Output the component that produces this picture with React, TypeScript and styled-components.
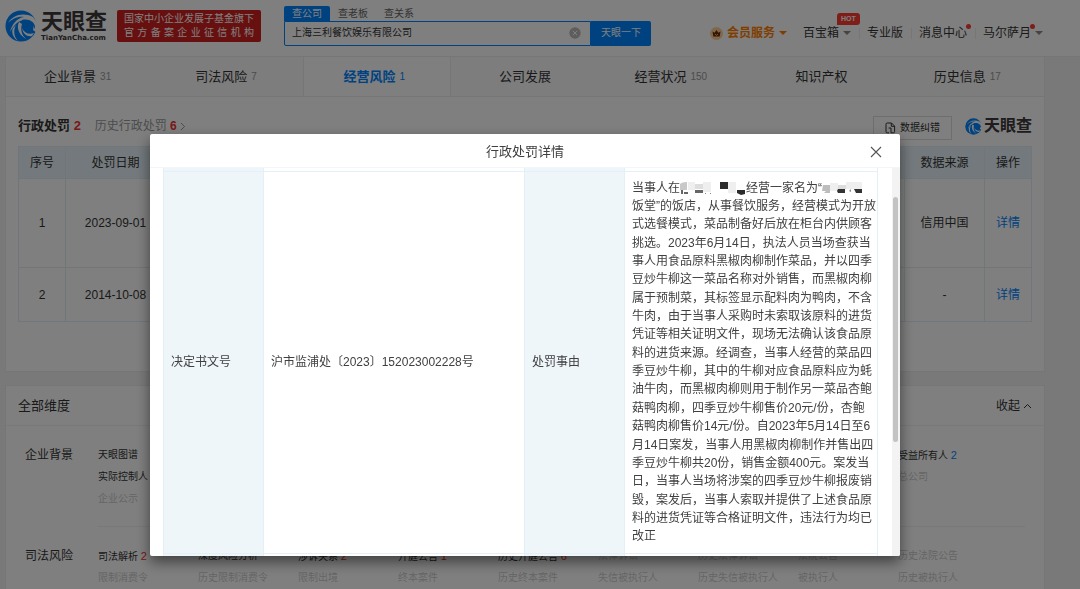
import React from "react";
import styled, { createGlobalStyle } from "styled-components";

const GlobalStyle = createGlobalStyle`
  *, *::before, *::after { box-sizing: border-box; }
  body {
    margin: 0;
    overflow: hidden;
    background: #f3f3f3;
    color: #333;
    font-family: "Liberation Sans", "Noto Sans CJK SC", sans-serif;
    font-size: 12px;
    line-height: 18px;
  }
  button, input { font: inherit; color: inherit; }
  a { color: inherit; text-decoration: none; }
  h1, h2, h3, p { margin: 0; font: inherit; }
`;

const Page = styled.div`
  height: 100vh;
  overflow: hidden;
`;

/* ---------- header ---------- */

const Header = styled.header`
  display: flex;
  align-items: center;
  height: 57px;
  padding: 0 37px 5px 5px;
  background: #fff;
  border-bottom: 1px solid #ececec;
`;

const Logo = styled.a`
  display: flex;
  align-items: center;
  gap: 4px;
  flex: none;
`;

const Wordmark = styled.span<{ $size: number }>`
  display: block;
  font-size: ${(p) => p.$size}px;
  line-height: ${(p) => p.$size + 2}px;
  font-weight: 700;
  color: #3c3838;
  white-space: nowrap;
`;

const Domain = styled.span`
  display: block;
  font: 700 7px/8px "DejaVu Sans", sans-serif;
  color: #3c3838;
`;

const Banner = styled.div`
  flex: none;
  width: 144px;
  height: 32px;
  margin-left: 10px;
  padding: 2px 7px;
  border-radius: 2px;
  background: #d0201f;
  color: #fff;
  font-size: 10px;
  line-height: 14px;
  white-space: nowrap;
`;

const BannerLine = styled.span`
  display: block;
  text-align-last: justify;
`;

const Search = styled.form`
  flex: none;
  width: 367px;
  margin: 0 12px 0 23px;
  font-size: 10px;
`;

const SearchTabs = styled.div`
  display: flex;
`;

const SearchTab = styled.button<{ $active?: boolean }>`
  height: 15px;
  width: 46px;
  padding: 0;
  border: 0;
  border-radius: 2px 2px 0 0;
  line-height: 15px;
  background: ${(p) => (p.$active ? "#0084ff" : "transparent")};
  color: ${(p) => (p.$active ? "#fff" : "#666")};
`;

const SearchBar = styled.div`
  display: flex;
  height: 25px;
`;

const SearchField = styled.div`
  display: flex;
  align-items: center;
  flex: 1;
  padding-right: 9px;
  border: 1px solid #0084ff;
  border-radius: 0 0 0 2px;
`;

const SearchInput = styled.input`
  flex: 1;
  min-width: 0;
  padding: 0 7px;
  border: 0;
  outline: 0;
  background: none;
`;

const PlainButton = styled.button`
  display: flex;
  align-items: center;
  padding: 0;
  border: 0;
  background: none;
`;

const SearchSubmit = styled.button`
  width: 60px;
  padding: 0;
  border: 0;
  border-radius: 0 2px 2px 0;
  background: #0084ff;
  color: #fff;
`;

const Nav = styled.nav`
  display: flex;
  align-items: center;
  margin-left: auto;
  padding-top: 15px;
  white-space: nowrap;
`;

const NavItem = styled.a<{ $vip?: boolean }>`
  position: relative;
  display: flex;
  align-items: center;
  gap: 4px;
  padding: 0 8px;
  color: ${(p) => (p.$vip ? "#ff7d00" : "#333")};
  font-weight: ${(p) => (p.$vip ? 700 : 400)};

  & + &::before {
    content: "";
    position: absolute;
    left: 0;
    width: 1px;
    height: 11px;
    background: #eee;
  }

  &:last-child { padding-right: 0; }
`;

const Caret = styled.i<{ $color?: string }>`
  border: solid transparent;
  border-width: 4px 4px 0;
  border-top-color: ${(p) => p.$color || "#888"};
`;

const HotBadge = styled.span`
  position: absolute;
  top: -11px;
  right: -1px;
  width: 23px;
  height: 12px;
  border-radius: 3px 3px 3px 0;
  background: #ff3b30;
  color: #fff;
  font-size: 7px;
  font-weight: 700;
  line-height: 12px;
  text-align: center;
`;

const Dot = styled.span<{ $beforeCaret?: boolean }>`
  position: absolute;
  top: 0;
  right: ${(p) => (p.$beforeCaret ? 8 : 4)}px;
  width: 5px;
  height: 5px;
  border-radius: 50%;
  background: #ff3b30;
`;

/* ---------- content ---------- */

const Content = styled.main`
  margin: 0 35px 0 5px;
`;

const Tabs = styled.nav`
  display: grid;
  grid-template-columns: repeat(7, 1fr);
  height: 40px;
  border: solid #ececec;
  border-width: 0 1px 1px;
  background: #fafafa;
`;

const Tab = styled.a<{ $active?: boolean }>`
  display: flex;
  align-items: center;
  justify-content: center;
  gap: 4px;
  font-size: 13px;
  color: ${(p) => (p.$active ? "#0084ff" : "#333")};
  font-weight: ${(p) => (p.$active ? 700 : 400)};
  background: ${(p) => (p.$active ? "#fff" : "transparent")};
  border: solid ${(p) => (p.$active ? "#ececec" : "transparent")};
  border-width: 0 1px;
`;

const TabCount = styled.span<{ $active?: boolean }>`
  padding-right: 5px;
  font-size: 10px;
  font-weight: 400;
  color: ${(p) => (p.$active ? "#0084ff" : "#999")};
`;

const Card = styled.section`
  background: #fff;
  border: 1px solid #ececec;
  border-top: 0;
`;

const PenaltyCard = styled(Card)`
  margin-bottom: 13px;
  padding: 17px 12px 49px;
`;

const CardHead = styled.div`
  display: flex;
  align-items: center;
  height: 24px;
  margin-bottom: 8px;
`;

const CardTitle = styled.h2`
  font-size: 13px;
  font-weight: 700;
`;

const Red = styled.span`
  color: #f23030;
`;

const Blue = styled.span`
  color: #0084ff;
`;

const HistoryLink = styled.a`
  display: flex;
  align-items: center;
  gap: 3px;
  margin-left: 14px;
  color: #999;

  b { color: #f23030; }
`;

const FixButton = styled.button`
  display: flex;
  align-items: center;
  justify-content: center;
  gap: 4px;
  width: 79px;
  height: 24px;
  margin: 3px 13px 0 auto;
  padding: 0;
  border: 1px solid #ddd;
  background: #fff;
  font-size: 10px;
`;

const SmallLogo = styled.span`
  display: flex;
  align-items: center;
  gap: 2px;
`;

const PenaltyTable = styled.table`
  width: 100%;
  border-collapse: collapse;
  table-layout: fixed;
  text-align: center;

  th, td {
    padding: 0;
    border: 1px solid #e1edf5;
    font-weight: 400;
  }
  th { height: 32px; background: #e6f2f9; }
  a { color: #0084ff; }
`;

const PenaltyRow = styled.tr<{ $height: number }>`
  height: ${(p) => p.$height}px;
`;

const DimensionCard = styled(Card)`
  border-top: 1px solid #ececec;
`;

const DimensionHead = styled.div`
  display: flex;
  align-items: center;
  justify-content: space-between;
  height: 40px;
  padding: 0 12px;
  border-bottom: 1px solid #f2f2f2;
`;

const DimensionTitle = styled.h2`
  font-size: 13px;
`;

const Toggle = styled(PlainButton)`
  gap: 3px;
`;

const Group = styled.div`
  display: grid;
  grid-template-columns: 73px 1fr;
  padding: 18px 19px 0;
`;

const GroupName = styled.h3`
  font-size: 12px;
  line-height: 22px;
`;

const GroupItems = styled.div`
  display: grid;
  grid-template-columns: repeat(9, 100px);
  grid-auto-rows: 22px;
  min-height: 83px;
  border-bottom: 1px solid #f2f2f2;
  font-size: 10px;
  line-height: 22px;
  white-space: nowrap;
`;

const Item = styled.a<{ $muted?: boolean; $column?: number }>`
  color: ${(p) => (p.$muted ? "#ccc" : "#333")};
  ${(p) => p.$column && `grid-column: ${p.$column};`}

  span { font-size: 11px; }
`;

/* ---------- modal ---------- */

const Overlay = styled.div`
  position: fixed;
  inset: 0;
  display: flex;
  justify-content: center;
  padding: 134px 30px 33px 0;
  background: rgba(0, 0, 0, 0.5);
`;

const Modal = styled.div`
  display: flex;
  flex-direction: column;
  width: 750px;
  max-width: 94%;
  border-radius: 2px;
  overflow: hidden;
  background: #fff;
  color: #404040;
  box-shadow: 0 6px 14px rgba(0, 0, 0, 0.5);
`;

const ModalHead = styled.div`
  display: grid;
  grid-template-columns: 1fr auto 1fr;
  align-items: center;
  flex: none;
  height: 34px;
  padding: 2px 18px 0;
  border-bottom: 1px solid #f3f6f8;
`;

const ModalTitle = styled.h1`
  grid-column: 2;
  font-size: 13px;
`;

const CloseButton = styled(PlainButton)`
  justify-self: end;
`;

const ModalBody = styled.div`
  display: flex;
  flex: 1;
  min-height: 0;
  padding-left: 13px;
  overflow: hidden;
`;

const DetailTable = styled.table`
  flex: 1;
  align-self: flex-start;
  border-collapse: collapse;
  table-layout: fixed;

  th, td {
    padding: 0 7px;
    border: 1px solid #e4f0f7;
    border-top: 0;
    font-weight: 400;
    text-align: left;
  }
  th { background: #eef6fa; }
  td:last-child { padding: 7px 0 7px 7px; }
`;

const EdgeRow = styled.tr<{ $height: number }>`
  height: ${(p) => p.$height}px;

  && > td { padding: 0; }
`;

const Statement = styled.p`
  display: flex;
  flex-direction: column;
  justify-content: space-between;
  height: 367px;
  white-space: nowrap;
`;

const Track = styled.div`
  flex: none;
  width: 8px;
  margin-left: 14px;
  padding: 29px 2px 0 1px;
  background: #f3f3f3;
`;

const Thumb = styled.div`
  height: 245px;
  border-radius: 3px;
  background: #c3c3c3;
`;

/* ---------- drawings ---------- */

const Swirl = ({ size }: { size: number }) => (
  <svg width={size} height={size} viewBox="0 0 32 32" aria-hidden="true">
    <circle cx="16" cy="16" r="15.5" fill="#0084ff" />
    <path d="M3 13C8 5 18 2 28 7L32 12L32 23L28 20C30 15 26 10 20 10C13 10 9 15 5 22C7 14 12 8 19 7C13 6 7 9 3 13Z" fill="#fff" />
    <path d="M17 10C25 8 31 13 30 19C27 12 22 12 17 12Z" fill="#0084ff" />
    <path d="M14 12C11 18 14 26 23 30C17 27 15 20 17 14Z" fill="#fff" />
    <path d="M17 18C19 23 24 25 29 23L27 26C22 27 18 24 17 18Z" fill="#fff" />
    <path d="M11 15C8 20 9 27 13 31C8 28 6 22 8 18Z" fill="#fff" />
  </svg>
);

const Crown = () => (
  <svg width="13" height="13" viewBox="0 0 13 13" aria-hidden="true">
    <circle cx="6.5" cy="6.5" r="6.5" fill="#ffcf9c" />
    <path d="M2.5 4.5L4.6 5.7L6.5 3L8.4 5.7L10.5 4.5L9.7 9.5H3.3Z" fill="#6b2c00" />
    <path d="M5 7.2L6.5 8.3L8 7.2" fill="none" stroke="#ffcf9c" strokeWidth="0.8" />
  </svg>
);

const ClearIcon = () => (
  <svg width="12" height="12" viewBox="0 0 12 12" aria-hidden="true">
    <circle cx="6" cy="6" r="5.7" fill="#bbb" />
    <path d="M3.8 3.8L8.2 8.2M8.2 3.8L3.8 8.2" stroke="#fff" strokeWidth="1" />
  </svg>
);

const FixIcon = () => (
  <svg width="11" height="12" viewBox="0 0 11 12" fill="none" stroke="#333" aria-hidden="true">
    <path d="M4 10.8H2.2Q1 10.8 1 9.6V2.2Q1 1 2.2 1H6.5L9.6 4.1V9.6Q9.6 10.8 8.4 10.8H6" />
    <path d="M6.3 1V4.3H9.6M3.6 6H6V10.8" />
  </svg>
);

const Chevron = ({ up }: { up?: boolean }) => (
  <svg width={up ? 9 : 6} height={up ? 6 : 9} viewBox={up ? "0 0 9 6" : "0 0 6 9"} fill="none" stroke={up ? "#333" : "#999"} aria-hidden="true">
    <path d={up ? "M1 5L4.5 1.5L8 5" : "M1 1L4.6 4.5L1 8"} />
  </svg>
);

const CloseIcon = () => (
  <svg width="12" height="12" viewBox="0 0 12 12" stroke="#555" strokeWidth="1.1" aria-hidden="true">
    <path d="M1 1L11 11M11 1L1 11" />
  </svg>
);

const MaskedPlace = () => (
  <svg width="66" height="14" viewBox="0 0 66 14" style={{ verticalAlign: "middle" }} aria-hidden="true">
    <path d="M0 3Q2 1 7 1V9H0Z" fill="#c8c8c8" />
    <path d="M8 1H15V9H8ZM23 1H31V11H23ZM48 1H56V12H48Z" fill="#efefef" />
    <path d="M15 3H23V8H15Z" fill="#dedede" />
    <path d="M1 9H3V13H1ZM4 11H8V13H4ZM15 9H23V12H15Z" fill="#666" />
    <path d="M40 1H48V8H40ZM57 9H65V13L61 14L57 12Z" fill="#2b2b2b" />
    <path d="M25 12H26V13H25ZM30 12H31V13H30Z" fill="#888" />
  </svg>
);

const MaskedName = () => (
  <svg width="42" height="12" viewBox="0 0 42 12" style={{ verticalAlign: "middle" }} aria-hidden="true">
    <path d="M1 3H8V11H2L4 9H0Z" fill="#bdbdbd" />
    <path d="M8 1H16V9H8ZM24 0H32V7H24ZM32 0H40V7H32Z" fill="#efefef" />
    <path d="M16 3H24V7H16Z" fill="#ddd" />
    <path d="M15 9L16 7H23V11H16ZM32 7H40V11H34Z" fill="#333" />
    <path d="M27 9L29 7V10Z" fill="#888" />
  </svg>
);

/* ---------- data ---------- */

const tabs = [
  { name: "企业背景", count: 31 },
  { name: "司法风险", count: 7 },
  { name: "经营风险", count: 1, active: true },
  { name: "公司发展" },
  { name: "经营状况", count: 150 },
  { name: "知识产权" },
  { name: "历史信息", count: 17 },
];

const penalties = [
  { id: 1, date: "2023-09-01", source: "信用中国", height: 89 },
  { id: 2, date: "2014-10-08", source: "-", height: 54 },
];

const judicial = [
  { name: "司法解析", count: 2 },
  { name: "深度风险分析" },
  { name: "涉诉关系", count: 2 },
  { name: "开庭公告", count: 1 },
  { name: "历史开庭公告", count: 6 },
  { name: "法律诉讼", muted: true },
  { name: "历史法律诉讼", muted: true },
  { name: "法院公告", muted: true },
  { name: "历史法院公告", muted: true },
  { name: "限制消费令", muted: true },
  { name: "历史限制消费令", muted: true },
  { name: "限制出境", muted: true },
  { name: "终本案件", muted: true },
  { name: "历史终本案件", muted: true },
  { name: "失信被执行人", muted: true },
  { name: "历史失信被执行人", muted: true },
  { name: "被执行人", muted: true },
  { name: "历史被执行人", muted: true },
];

const statement = [
  "饭堂”的饭店，从事餐饮服务，经营模式为开放",
  "式选餐模式，菜品制备好后放在柜台内供顾客",
  "挑选。2023年6月14日，执法人员当场查获当",
  "事人用食品原料黑椒肉柳制作菜品，并以四季",
  "豆炒牛柳这一菜品名称对外销售，而黑椒肉柳",
  "属于预制菜，其标签显示配料肉为鸭肉，不含",
  "牛肉，由于当事人采购时未索取该原料的进货",
  "凭证等相关证明文件，现场无法确认该食品原",
  "料的进货来源。经调查，当事人经营的菜品四",
  "季豆炒牛柳，其中的牛柳对应食品原料应为蚝",
  "油牛肉，而黑椒肉柳则用于制作另一菜品杏鲍",
  "菇鸭肉柳，四季豆炒牛柳售价20元/份，杏鲍",
  "菇鸭肉柳售价14元/份。自2023年5月14日至6",
  "月14日案发，当事人用黑椒肉柳制作并售出四",
  "季豆炒牛柳共20份，销售金额400元。案发当",
  "日，当事人当场将涉案的四季豆炒牛柳报废销",
  "毁，案发后，当事人索取并提供了上述食品原",
  "料的进货凭证等合格证明文件，违法行为均已",
  "改正",
];

export default function App() {
  return (
    <>
      <GlobalStyle />
      <Page>
        <Header>
          <Logo href="#">
            <Swirl size={32} />
            <span>
              <Wordmark $size={22}>天眼查</Wordmark>
              <Domain>TianYanCha.com</Domain>
            </span>
          </Logo>
          <Banner>
            <BannerLine>国家中小企业发展子基金旗下</BannerLine>
            <BannerLine>官方备案企业征信机构</BannerLine>
          </Banner>
          <Search onSubmit={(e) => e.preventDefault()}>
            <SearchTabs>
              <SearchTab type="button" $active>查公司</SearchTab>
              <SearchTab type="button">查老板</SearchTab>
              <SearchTab type="button">查关系</SearchTab>
            </SearchTabs>
            <SearchBar>
              <SearchField>
                <SearchInput aria-label="公司名称" defaultValue="上海三利餐饮娱乐有限公司" />
                <PlainButton type="button" aria-label="清空"><ClearIcon /></PlainButton>
              </SearchField>
              <SearchSubmit type="submit">天眼一下</SearchSubmit>
            </SearchBar>
          </Search>
          <Nav>
            <NavItem href="#" $vip><Crown />会员服务<Caret $color="#ff7d00" /></NavItem>
            <NavItem href="#">百宝箱<Caret /><HotBadge>HOT</HotBadge></NavItem>
            <NavItem href="#">专业版</NavItem>
            <NavItem href="#">消息中心<Dot /></NavItem>
            <NavItem href="#">马尔萨月<Caret /><Dot $beforeCaret /></NavItem>
          </Nav>
        </Header>

        <Content>
          <Tabs>
            {tabs.map((t) => (
              <Tab key={t.name} href="#" $active={t.active}>
                {t.name}
                {t.count && <TabCount $active={t.active}>{t.count}</TabCount>}
              </Tab>
            ))}
          </Tabs>

          <PenaltyCard>
            <CardHead>
              <CardTitle>行政处罚 <Red>2</Red></CardTitle>
              <HistoryLink href="#">历史行政处罚 <b>6</b><Chevron /></HistoryLink>
              <FixButton type="button"><FixIcon />数据纠错</FixButton>
              <SmallLogo><Swirl size={17} /><Wordmark $size={16}>天眼查</Wordmark></SmallLogo>
            </CardHead>
            <PenaltyTable>
              <colgroup>
                <col style={{ width: 47 }} />
                <col style={{ width: 100 }} />
                <col />
                <col style={{ width: 80 }} />
                <col style={{ width: 47 }} />
              </colgroup>
              <thead>
                <tr><th>序号</th><th>处罚日期</th><th /><th>数据来源</th><th>操作</th></tr>
              </thead>
              <tbody>
                {penalties.map((p) => (
                  <PenaltyRow key={p.id} $height={p.height}>
                    <td>{p.id}</td>
                    <td>{p.date}</td>
                    <td />
                    <td>{p.source}</td>
                    <td><a href="#">详情</a></td>
                  </PenaltyRow>
                ))}
              </tbody>
            </PenaltyTable>
          </PenaltyCard>

          <DimensionCard>
            <DimensionHead>
              <DimensionTitle>全部维度</DimensionTitle>
              <Toggle type="button">收起<Chevron up /></Toggle>
            </DimensionHead>
            <Group>
              <GroupName>企业背景</GroupName>
              <GroupItems>
                <Item href="#" $column={1}>天眼图谱</Item>
                <Item href="#" $column={9}>受益所有人 <Blue>2</Blue></Item>
                <Item href="#" $column={1}>实际控制人</Item>
                <Item href="#" $column={9} $muted>总公司</Item>
                <Item href="#" $column={1} $muted>企业公示</Item>
              </GroupItems>
            </Group>
            <Group>
              <GroupName>司法风险</GroupName>
              <GroupItems>
                {judicial.map((j) => (
                  <Item key={j.name} href="#" $muted={j.muted}>
                    {j.name} {j.count && <Red>{j.count}</Red>}
                  </Item>
                ))}
              </GroupItems>
            </Group>
          </DimensionCard>
        </Content>
      </Page>

      <Overlay>
        <Modal role="dialog" aria-modal="true" aria-labelledby="detail-title">
          <ModalHead>
            <ModalTitle id="detail-title">行政处罚详情</ModalTitle>
            <CloseButton type="button" aria-label="关闭"><CloseIcon /></CloseButton>
          </ModalHead>
          <ModalBody>
            <DetailTable>
              <colgroup>
                <col style={{ width: 100 }} />
                <col />
                <col style={{ width: 100 }} />
                <col style={{ width: 253 }} />
              </colgroup>
              <tbody>
                <EdgeRow $height={3}><th /><td /><th /><td /></EdgeRow>
                <tr>
                  <th scope="row">决定书文号</th>
                  <td>沪市监浦处〔2023〕152023002228号</td>
                  <th scope="row">处罚事由</th>
                  <td>
                    <Statement>
                      <span>当事人在<MaskedPlace />经营一家名为“<MaskedName /></span>
                      {statement.map((line) => <span key={line}>{line}</span>)}
                    </Statement>
                  </td>
                </tr>
                <EdgeRow $height={40}><th /><td /><th /><td /></EdgeRow>
              </tbody>
            </DetailTable>
            <Track><Thumb /></Track>
          </ModalBody>
        </Modal>
      </Overlay>
    </>
  );
}
